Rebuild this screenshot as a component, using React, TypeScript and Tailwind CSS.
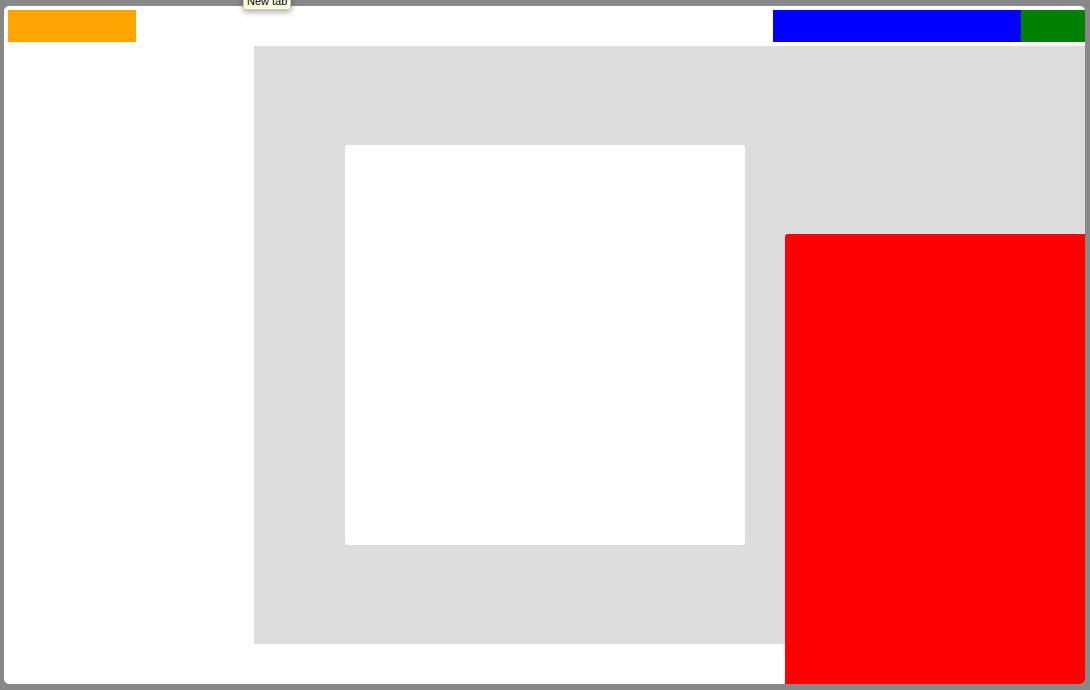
export default function App() {
  return (
    <div className="relative h-[690px] w-[1090px] bg-[#888888] pt-[6px] pl-[4px] pr-[5px] pb-[6px] font-['Liberation_Sans',sans-serif]">
      <div className="relative flex h-full flex-col overflow-hidden rounded-[5px] bg-white">
        {/* toolbar */}
        <div className="flex h-[40px] shrink-0 items-start justify-between pt-[4px] pl-[4px]">
          <div className="h-[32px] w-[128px] bg-[#ffa500]" />
          <div className="flex">
            <div className="h-[32px] w-[248px] bg-[#0000ff]" />
            <div className="h-[32px] w-[64px] bg-[#008000]" />
          </div>
        </div>
        <div className="flex">
          <div className="w-[250px] shrink-0" />
          <div className="h-[598px] flex-1 bg-[#dddddd] pt-[99px] pl-[91px]">
            <div className="h-[400px] w-[400px] rounded-[3px] bg-white" />
          </div>
        </div>
        {/* floating panel */}
        <div className="absolute top-[228px] left-[781px] h-[460px] w-[300px] rounded-tl-[3px] bg-[#ff0000]" />
      </div>
      <div className="absolute top-[-7px] left-[243px] rounded-[2px] border border-[#c8c8a8] bg-[#ffffe1] px-[3px] text-[11px] leading-[15px] text-black shadow-[0_2px_6px_rgba(0,0,0,0.35)]">
        New tab
      </div>
    </div>
  );
}
